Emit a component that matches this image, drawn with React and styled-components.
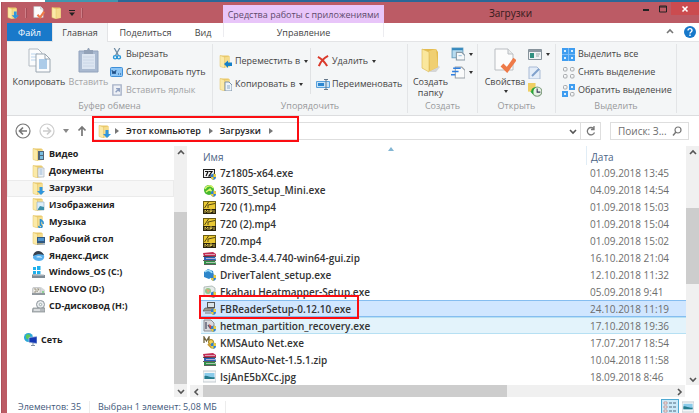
import React from 'react';
import styled, { createGlobalStyle, css } from 'styled-components';

const Global = createGlobalStyle`
  * { box-sizing: border-box; }
  body { margin: 0; background: #fff; font: 500 9px/12px "Open Sans", "Noto Sans", sans-serif; color: #444; overflow: hidden; }
  button, input { font: inherit; color: inherit; border: 0; background: none; padding: 0; margin: 0; }
  svg { display: block; flex: none; }
`;

/* ---------- layout ---------- */
const Desktop = styled.div`
  display: flex; flex-direction: column; height: 100vh; padding: 2px 0 0 1px;
  background: linear-gradient(90deg, #fff 0 45px, #4096b0 45px 118px, #2a6797 118px);
`;
const Frame = styled.div`
  flex: 1; min-height: 0; display: flex; flex-direction: column;
  background: #bc5b65; padding-left: 5px; border-left: 1px solid #a9505a;
`;
const TitleBar = styled.header`display: flex; height: 21px; flex: none;`;
const QuickAccess = styled.div`
  width: 216px; flex: none; display: flex; align-items: center; gap: 6px;
`;
const QuickButton = styled.button`display: flex;`;
const Tick = styled.span`width: 2px; height: 10px; background: #cf7f88; border-right: 1px solid #a34d57;`;
const ContextTitle = styled.div`
  width: 161px; flex: none; margin-top: 3px; background: #e8c5f9; color: #5d4a6b;
  text-align: center; line-height: 20px; white-space: nowrap; font-weight: 400;
`;
const Title = styled.h1`
  flex: 1; margin: 0; text-align: center; font-size: 10px; font-weight: 500; line-height: 22px; color: #33191c;
`;
const WindowControls = styled.div`display: flex; flex: none; height: 13px;`;
const WindowButton = styled.button`
  width: ${p => (p.$close ? 28 : 17)}px; display: flex; align-items: center; justify-content: center;
  background: ${p => (p.$close ? '#cb4b4f' : 'transparent')};
`;

const Tabs = styled.nav`display: flex; height: 19px; flex: none; background: #fff; border-bottom: 1px solid #e3e4e6;`;
const Tab = styled.button`
  width: ${p => p.$w}px; flex: none; text-align: center; line-height: 20px; height: 19px; color: #444;
  ${p => p.$file && css`background: #1979ca; color: #fff; height: 18px;`}
  ${p => p.$active && css`background: #f4f6f7; border: solid #e3e4e6; border-width: 0 1px;`}
  ${p => p.$context && css`border: solid #ececf0; border-width: 0 1px; height: 14px;`}
`;
const TabTools = styled.div`margin-left: auto; display: flex; align-items: center; gap: 10px; padding-right: 3px;`;

const Ribbon = styled.section`
  display: flex; height: 74px; flex: none; background: #f4f6f7; border-bottom: 1px solid #dcdddf; padding-bottom: 2px;
`;
const Group = styled.div`
  flex: 0 0 ${p => p.$w}px; display: flex; flex-direction: column; border-right: 1px solid #e3e5e7; margin-top: 2px;
`;
const GroupBody = styled.div`flex: 1; display: flex; padding-left: ${p => p.$pad || 0}px; gap: ${p => p.$gap || 0}px;`;
const GroupLabel = styled.div`text-align: center; color: #98999b; height: 13px; line-height: 12px;`;
const Stack = styled.div`
  display: flex; flex-direction: column; gap: ${p => p.$gap}px; padding-top: ${p => p.$top}px;
  ${p => p.$w && css`width: ${p.$w}px; flex: none;`}
  ${p => p.$ruled && css`border-right: 1px solid #e0e2e4; height: 46px; margin-top: 4px; padding-top: 6px;`}
`;
const Command = styled.button`
  display: flex; align-items: center; gap: 3px; height: 14px; line-height: 14px; white-space: nowrap; color: ${p => (p.disabled ? '#a3a4a6' : '#444')};
`;
const CommandIcon = styled.span`width: 13px; flex: none; display: flex; justify-content: center;`;
const BigCommand = styled.button`
  width: ${p => p.$w}px; flex: none; display: flex; flex-direction: column; align-items: center; padding-top: 4px; gap: 3px;
  line-height: 11px; white-space: nowrap; color: ${p => (p.disabled ? '#a3a4a6' : '#444')};
`;
const Caret = styled.i`
  display: inline-block; border: 2px solid transparent; border-top: 3px solid #333; border-bottom: 0; margin-left: 1px;
`;

const AddressRow = styled.div`
  position: relative; display: flex; align-items: center; height: 30px; flex: none; background: #fff; padding-right: 10px;
`;
const NavButtons = styled.div`width: 86px; flex: none; display: flex; align-items: center; gap: 8px; padding-left: 8px;`;
const PlainButton = styled.button`display: flex; align-items: center; justify-content: center;`;
const AddressBox = styled.div`
  flex: 1; display: flex; align-items: center; height: 18px; border: 1px solid #dedede; padding-left: 4px; color: #222; font-weight: 600;
`;
const Crumb = styled.a`padding: 0 8px 0 7px; white-space: nowrap; color: inherit; text-decoration: none;`;
const RootCrumb = styled.button`margin-left: 4px;`;
const AddressEnd = styled.div`
  margin-left: auto; display: flex; align-items: center; height: 16px;
`;
const EndButton = styled(PlainButton)`
  width: ${p => p.$w}px; height: 16px; border-left: ${p => (p.$line ? '1px solid #dedede' : '0')};
`;
const Search = styled.label`
  width: 79px; height: 18px; margin-left: 9px; border: 1px solid #dedede; display: flex; align-items: center; padding: 0 6px 0 7px; color: #6d6d6d;
  font-size: 10px;
  input { flex: 1; min-width: 0; outline: 0; }
  input::placeholder { color: #6d6d6d; opacity: 1; }
`;
const Mark = styled.span`
  position: absolute; z-index: 2; border: 2px solid #fb0d12; pointer-events: none;
  left: ${p => p.$left}px; width: ${p => p.$width}px; top: ${p => p.$top}px; bottom: ${p => p.$bottom}px;
`;

const Content = styled.main`flex: 1; min-height: 0; display: flex; background: #fff;`;
const NavPane = styled.aside`width: 180px; flex: none; display: flex;`;
const NavList = styled.ul`
  flex: 1; margin: 0; padding: 0 0 15px; list-style: none; display: grid; grid-template-rows: repeat(14, 1fr);
`;
const NavItem = styled.li`
  display: flex; align-items: center; padding-left: ${p => (p.$root ? 16 : 24)}px;
  border: 1px solid ${p => (p.$active ? '#ebebeb' : 'transparent')}; background: ${p => (p.$active ? '#f7f7f7' : 'transparent')};
`;
const NavLink = styled.a`
  display: flex; align-items: center; gap: 4px; color: #222; font-weight: 700; text-decoration: none; white-space: nowrap;
`;
const VScroll = styled.div`width: 13px; flex: none; display: flex; flex-direction: column; background: #f0f0f0;`;
const HScroll = styled.div`height: 12px; flex: none; display: flex; background: #f0f0f0; margin-right: 1px;`;
const ScrollArrow = styled(PlainButton)`width: 13px; height: 13px; flex: none;`;
const ScrollTrack = styled.div`flex: ${p => p.$n} 0 0; background: ${p => (p.$thumb ? '#cdcdcd' : 'transparent')};`;

const FilePane = styled.section`flex: 1; min-width: 0; display: flex; margin-left: 3px;`;
const FileMain = styled.div`flex: 1; min-width: 0; display: flex; flex-direction: column;`;
const FileArea = styled.div`flex: 1; min-height: 0; padding-left: 11px;`;
const ScrollColumn = styled.div`display: flex; padding-bottom: 12px;`;
const FileTable = styled.table`
  width: 100%; height: 100%; border-collapse: separate; border-spacing: 0; table-layout: fixed; font-size: 10px;
`;
const HeadCell = styled.th`
  height: 19px; padding: 2px 0 0 ${p => (p.$date ? 4 : 2)}px; width: ${p => (p.$date ? '100px' : 'auto')};
  text-align: left; font-weight: 500; color: #4d6485; position: relative;
  ${p => p.$date && css`border-left: 1px solid #e1edf6;`}
  svg { position: absolute; top: 1px; left: 187px; }
`;
const FileRow = styled.tr`
  --edge: ${p => (p.$state === 'selected' ? '#85bdf0' : p.$state === 'hover' ? '#b6e0f3' : 'transparent')};
  background: ${p => (p.$state === 'selected' ? '#d0e6ff' : p.$state === 'hover' ? '#e3f3fb' : 'transparent')};
`;
const Cell = styled.td`
  position: relative; padding: 0 0 0 ${p => (p.$date ? 4 : 2)}px; border: solid var(--edge); border-width: 1px 0;
  font-weight: ${p => (p.$date ? 500 : 600)}; color: ${p => (p.$date ? '#6d6d6d' : '#333')}; white-space: nowrap;
`;
const FileName = styled.span`display: flex; align-items: center; gap: 4px; height: 14px;`;

const Status = styled.footer`
  height: 16px; flex: none; display: flex; align-items: center; background: #fff; color: #42587a; padding: 3px 5px 0 11px;
`;
const StatusText = styled.span`padding-right: 8px; margin-right: 8px; border-right: 1px solid #ececec; line-height: 12px;`;
const Views = styled.div`margin-left: auto; display: flex; gap: 3px; align-items: center;`;
const ViewButton = styled(PlainButton)`
  width: ${p => (p.$on ? 18 : 12)}px; height: 16px;
  ${p => p.$on && css`background: #cbe9f8; border: 1px solid #4fa9d2;`}
`;

/* ---------- drawings ---------- */
const Svg = ({ w = 13, h = w, box = '0 0 13 13', children }) => (
  <svg width={w} height={h} viewBox={box} fill="none" aria-hidden="true">{children}</svg>
);
const FolderShape = () => (
  <>
    <path d="M1 .5h8.500l1 1V12H5z" fill="#e9c868" />
    <path d="M5 2.500l5.500-1V12L5 13z" fill="#f5dc8c" />
    <path d="M1 .5l4.500 1.500v11L1 11.500z" fill="#fbeaa8" stroke="#e2c163" strokeWidth=".5" />
  </>
);
const overlays = {
  none: null,
  down: <path d="M7.500 5h3v4h2.500l-4 4-4-4h2.500z" fill="#2f95dd" />,
  left: <path d="M5 9l4-3.500v2h4v3.500H9V13z" fill="#1680c8" />,
  page: <><path d="M6 4h4l3 3v6H6z" fill="#eef4fa" stroke="#7e95ab" /><path d="M8 8h3M8 10h3" stroke="#89a9c8" /></>,
  video: <><path d="M6 3h6v9H6z" fill="#526577" /><path d="M8 4h3v3H8zM8 8h3v3H8z" fill="#79bde0" /></>,
  doc: <><path d="M6 3h6v9H6z" fill="#eef2f6" stroke="#a7b1bb" strokeWidth=".7" /><path d="M7.500 5h3M7.500 7h3M7.500 9h3" stroke="#6f9bc4" strokeWidth=".7" /></>,
  image: <><path d="M5 4h7v8H5z" fill="#dceefa" stroke="#9eb4c4" strokeWidth=".7" /><path d="M6 11l2-3 4 1v3H6z" fill="#3a8fa8" /></>,
  music: <path d="M8.500 11V4c0 2 3.500 1.500 2.500 5M8 10a1.500 1.500 0 1 1-1 1" stroke="#2d8fd2" strokeWidth="1.600" />,
  desk: <><path d="M5 5h8v6H5z" fill="#31587f" /><path d="M6 6h6v3H6z" fill="#4d93cf" /><path d="M5 12h8" stroke="#5f7385" /></>,
};
const Folder = ({ o = 'none', s = 13 }) => <Svg w={s}><FolderShape />{overlays[o]}</Svg>;

const shield = <><path d="M8 7.500l2.500-1 2.500 1v2.500c0 1.500-1 2.500-2.500 3C9 12.500 8 11.500 8 10z" fill="#2f7fd0" /><path d="M10.500 6.500l2.500 1V10h-2.500zM8 10h2.500v3C9 12.500 8 11.500 8 10z" fill="#f0cf3a" /></>;
const icons = {
  yandex: <><path d="M1 9c0-4 2-6 5-6 4 0 7 2 6 6-1 4-9 4-11 0z" fill="#58b0ee" /><path d="M1 7c1-6 8-7 11-1-4-1-7-1-11 1z" fill="#39414d" /><path d="M4 8c2-2 6-1 6 1-3-1-4 0-6-1z" fill="#cfe9fb" /></>,
  win: <><path d="M1 1h3v3H1zM5 0h3.500v4H5zM1 5h3v3H1zM5 5h3.500v3.500H5z" fill="#1fb0ec" /><path d="M1 8l12 1v3H0V9z" fill="#7f8b95" /><path d="M1 9h11" stroke="#c4ccd2" /></>,
  drive: <><path d="M1 4h8l4 3v5H0V6z" fill="#d5d8da" /><path d="M0 10h13v2H0z" fill="#8f979d" /><path d="M1 5h7v5H1z" fill="#f4f4f0" stroke="#aaa" strokeWidth=".5" /><path d="M2 6h2v3H2M5 6h2L5 9" stroke="#8a8470" strokeWidth=".8" /><path d="M10 9h2" stroke="#48c94f" /></>,
  cd: <><circle cx="8.500" cy="4.500" r="4" fill="#e8ebee" stroke="#8d959b" /><circle cx="8.500" cy="4.500" r="1.200" fill="#fff" stroke="#9aa" /><path d="M1 8h12v4H0z" fill="#b5babe" stroke="#83898e" strokeWidth=".7" /><path d="M2 10h6" stroke="#fff" /></>,
  net: <><circle cx="4.500" cy="4.500" r="4.500" fill="#2ba8d8" /><path d="M2 2c3-2 5 0 4 2S3 7 2 5z" fill="#5cc95a" /><path d="M5 4.500l8-1v7l-8-1z" fill="#1337b4" stroke="#b9cbe0" strokeWidth=".7" /><path d="M9 10v2M7 12.500h4" stroke="#7e8fa3" /></>,
  seven: <><path d="M0 2h12v9H0z" fill="#222" /><path d="M1 3h10v7H1z" fill="#f4f4f4" /><path d="M2 4.500h3L3 9M6 4.500h3L6 9h3" stroke="#111" strokeWidth="1.200" />{shield}</>,
  green: <><circle cx="6" cy="6" r="5" fill="#46b82f" /><path d="M2 5c2-4 7-4 8-1M3 8l4-3 2 3" stroke="#d8f56d" strokeWidth="1.500" />{shield}</>,
  mp4: <><path d="M0 0h13v13H0z" fill="#6f5f12" /><path d="M1 1h11v7H1z" fill="#eac934" /><path d="M1.500 7l4-6M5 7V4l7-1.500" stroke="#463c10" strokeWidth=".9" /><path d="M0 8h13v5H0z" fill="#2a2410" /><path d="M2 12V9l1.500 1.500L5 9v3M7 12V9h2v1.500H7M11 9v3" stroke="#f5dc5a" strokeWidth=".8" /></>,
  rar: <><path d="M0 1l10-1 3 2v2l-12 1z" fill="#c22d55" /><path d="M1 5h11l1 3H1z" fill="#2b5fb8" /><path d="M1 9h11l1 3H1z" fill="#2f9148" /><path d="M0 4.500h13M0 8.500h13M1 12.500h12" stroke="#333" strokeWidth=".8" /><path d="M2 2.500h10M3 6.500h9M3 10.500h9" stroke="#e6d5dc" strokeWidth=".7" /></>,
  talent: <><path d="M1 4l4-3 5 2 1 5-5 3-5-2z" fill="#2d86ca" /><path d="M2 4c3-3 6-1 7 1" stroke="#9fdcf6" strokeWidth="1.600" />{shield}</>,
  ekahau: <><path d="M1 2l8-1 3 2v8l-3 1-8-1z" fill="#e7ecea" stroke="#98a7a2" strokeWidth=".7" /><circle cx="5" cy="6" r="3" fill="#8fc98a" /><path d="M3 4l4 1-2 3z" fill="#e9a07b" />{shield}</>,
  setup: <><path d="M4 0h8v6H4z" fill="#545454" /><path d="M5 1h6v4H5z" fill="#d9e3e8" /><path d="M2 6h9l-1 3H0z" fill="#9b9b92" stroke="#555" strokeWidth=".7" /><path d="M2 11h6" stroke="#777" />{shield}</>,
  hetman: <><path d="M1 1h7l3 3v8H1z" fill="#d8dade" stroke="#8b8d94" /><path d="M3 3v7M5 6l3 4" stroke="#5a5d70" strokeWidth="1.400" /><path d="M6 5l4 3-3 2z" fill="#d7493d" />{shield}</>,
  kms: <><path d="M1 7V1l2.500 4L6 1v6" stroke="#70643f" strokeWidth="1.300" /><circle cx="8" cy="6" r="2.500" fill="#f2cf55" stroke="#a08126" /><path d="M5 8l4 4" stroke="#c69a31" strokeWidth="2" />{shield}</>,
  jpg: <><path d="M0 1h13v11H0z" fill="#f4f6f7" stroke="#c3cbd0" /><path d="M1.500 3h10v6h-10z" fill="#8acbea" /><path d="M1.500 9V6c3-1 5 2 10 1v2z" fill="#247b8d" /></>,
};
const Pic = ({ n }) => <Svg>{icons[n]}</Svg>;

const CheckedPage = ({ w, h }) => (
  <Svg w={w} h={h} box="0 0 22 25">
    <path d="M1 1h13l5 5v16H1z" fill="#fcfcfc" stroke="#b9bdc1" /><path d="M14 1v5h5" stroke="#b9bdc1" fill="#e9ebec" />
    <path d="M8 17l5 5 8-11" stroke="#ee7a48" strokeWidth="4" />
  </Svg>
);
const Chevron = ({ d = 'down', c = '#555' }) => {
  const p = { down: 'M1 3l3 3 3-3', up: 'M1 5l3-3 3 3', left: 'M5 1L2 4l3 3', right: 'M3 1l3 3-3 3' }[d];
  return <Svg w={8} box="0 0 8 8"><path d={p} stroke={c} strokeWidth="1.600" /></Svg>;
};
const CrumbArrow = () => <Svg w={4} h={6} box="0 0 4 6"><path d="M0 0l4 3-4 3z" fill="#777" /></Svg>;
const CopyIcon = () => (
  <Svg w={23} h={25} box="0 0 23 25">
    <path d="M1 1h9l4 4v13H1z" fill="#fbfcfd" stroke="#b3bbc3" /><path d="M3 6h7M3 9h7M3 12h7" stroke="#b9d4ee" />
    <path d="M8 6h9l5 5v13H8z" fill="#fbfcfd" stroke="#99a5b0" /><path d="M17 6v5h5" stroke="#99a5b0" />
    <path d="M11 12h8M11 14h8M11 16h8M11 18h8M11 20h8" stroke="#5f9bd4" />
  </Svg>
);
const PasteIcon = () => (
  <Svg w={21} h={25} box="0 0 21 25">
    <path d="M1 3h19v21H1z" fill="#a9b9d0" stroke="#92a3bd" /><path d="M4 6h13v15H4z" fill="#dce5f1" />
    <path d="M6 2h3l1-2h1l1 2h3v4H6z" fill="#93a2b8" />
    <path d="M5 9h11M5 12h11M5 15h11M5 18h11" stroke="#cad6e6" />
  </Svg>
);
const CutIcon = () => (
  <Svg w={12}><path d="M3.500 0l4.500 8M9.500 0L5 8" stroke="#6d8ba3" strokeWidth="1.300" /><circle cx="4.500" cy="10" r="1.800" stroke="#2796d8" strokeWidth="1.500" /><circle cx="8.500" cy="10" r="1.800" stroke="#2796d8" strokeWidth="1.500" /></Svg>
);
const PathIcon = () => (
  <Svg w={13} h={10} box="0 0 13 10"><rect x=".5" y=".5" width="12" height="9" rx="1" fill="#8cc5f6" stroke="#3e8fd8" /><path d="M2 3l1 4 1-3 1 3 1-4M8 7h1M10 7h1" stroke="#1d4d85" /></Svg>
);
const LinkIcon = () => (
  <Svg w={12}><path d="M2 1h9v11H2z" fill="#eef1f6" stroke="#a7b2c8" strokeWidth="1.500" /><path d="M5 9l4-4M5.500 5H9v3.500" stroke="#8fa0c0" strokeWidth="1.500" /></Svg>
);
const DeleteIcon = () => <Svg w={12}><path d="M1 2c4 2 7 5 10 10M12 1C8 3 4 7 2 12" stroke="#da3a2b" strokeWidth="2.200" /></Svg>;
const RenameIcon = () => (
  <Svg w={14} h={11} box="0 0 14 11"><path d="M.5 2.500h13v6H.5z" fill="#c5e2f8" stroke="#5aa2dc" /><path d="M2 4h6v3H2z" fill="#2c86cf" /><path d="M8 .5h4M10 0v10M8 10.500h4" stroke="#66798a" /></Svg>
);
const BigFolder = () => (
  <Svg w={21} h={25} box="0 0 21 25">
    <path d="M15 15l5 4-4 5H9z" fill="#d5d6d7" /><path d="M2 1h14l2 3v15l-8 4-8-3z" fill="#e4bc50" /><path d="M9 3l7-2 2 18-8 4z" fill="#f0cf71" />
    <path d="M2 1l7 3v20l-7-4z" fill="#fae79d" stroke="#dfbf60" strokeWidth=".7" />
  </Svg>
);
const NewItem = () => (
  <Svg w={14}><path d="M1 1h10v9H1z" fill="#b8dcf0" stroke="#6fa5c4" /><path d="M1 2h10" stroke="#3589bd" strokeWidth="2" /><path d="M5 5h5l3 3v4H5z" fill="#f7f9fa" stroke="#899aa6" /><path d="M7 8h3" stroke="#9dc4de" /></Svg>
);
const EasyAccess = () => (
  <Svg w={14}><path d="M4 2h6l3 3v7H4z" fill="#fafbfb" stroke="#9aa2a9" /><path d="M2 3h7M1 6h6M0 9h4" stroke="#2f7fe0" strokeWidth="1.500" /></Svg>
);
const OpenIcon = () => (
  <Svg w={14} h={11} box="0 0 14 11"><path d="M.5.5h13v10H.5z" fill="#eef2f4" stroke="#87939b" /><path d="M1 2h12" stroke="#8d99a3" strokeWidth="2" /><path d="M2 4h4v5H2z" fill="#2f8f7f" /><path d="M8 5h4M8 7h3" stroke="#9aa" /></Svg>
);
const EditIcon = () => <Svg w={13}><path d="M1 1h8l3 3v9H1z" fill="#e4edf8" stroke="#a9bbd5" /><path d="M4 10l7-7" stroke="#7fa0cc" strokeWidth="2" /></Svg>;
const HistoryIcon = () => (
  <Svg w={14}><path d="M0 0h7v8H0z" fill="#efcf62" /><circle cx="8.500" cy="8" r="4.300" fill="#e7f3e4" stroke="#7d9b7c" /><path d="M8.500 5v3.500h3" stroke="#335" /><path d="M2 8l3 3V8c0-2 1-3 3-4-3 0-5 1-5 4z" fill="#26a537" /></Svg>
);
const SelectIcon = ({ on }) => (
  <Svg w={13}>
    {on === '1111' && <path d="M0 0h13v13H0z" fill="#7dbcf5" />}
    {[[0, 0], [7, 0], [0, 7], [7, 7]].map(([x, y], i) => {
      if (on[i] === '1') return <g key={i}><path d={`M${x} ${y}h6v6h-6z`} fill="#3f9df0" /><path d={`M${x + 2} ${y + 2}h2v2h-2z`} fill="#d9eeff" /></g>;
      return <rect key={i} x={x + 1.5} y={y + 1.5} width="3.500" height="3.500" rx="1" stroke="#a6a9ac" />;
    })}
  </Svg>
);
const Round = ({ dir, c }) => (
  <Svg w={16} box="0 0 16 16"><circle cx="8" cy="8" r="7" stroke={c} strokeWidth="1.200" /><path d={dir === 'l' ? 'M12 8H4.500M8 4.500L4.500 8 8 11.500' : 'M4 8h7.500M8 4.500L11.500 8 8 11.500'} stroke={c} strokeWidth="1.700" /></Svg>
);

/* ---------- data ---------- */
const places = [
  ['Видео', <Folder o="video" />], ['Документы', <Folder o="doc" />], ['Загрузки', <Folder o="down" />],
  ['Изображения', <Folder o="image" />], ['Музыка', <Folder o="music" />], ['Рабочий стол', <Folder o="desk" />],
  ['Яндекс.Диск', <Pic n="yandex" />], ['Windows_OS (C:)', <Pic n="win" />], ['LENOVO (D:)', <Pic n="drive" />],
  ['CD-дисковод (H:)', <Pic n="cd" />],
];
const files = [
  ['7z1805-x64.exe', '01.09.2018 13:45', 'seven'], ['360TS_Setup_Mini.exe', '04.09.2018 14:54', 'green'],
  ['720 (1).mp4', '01.09.2018 15:03', 'mp4'], ['720 (2).mp4', '01.09.2018 15:04', 'mp4'], ['720.mp4', '01.09.2018 15:02', 'mp4'],
  ['dmde-3.4.4.740-win64-gui.zip', '16.10.2018 21:04', 'rar'], ['DriverTalent_setup.exe', '12.10.2018 11:32', 'talent'],
  ['Ekahau Heatmapper-Setup.exe', '05.09.2018 9:41', 'ekahau'], ['FBReaderSetup-0.12.10.exe', '24.10.2018 11:19', 'setup', 'selected'],
  ['hetman_partition_recovery.exe', '17.10.2018 19:36', 'hetman', 'hover'], ['KMSAuto Net.exe', '17.07.2017 18:54', 'kms'],
  ['KMSAuto-Net-1.5.1.zip', '10.04.2018 11:58', 'rar'], ['IsjAnE5bXCc.jpg', '18.09.2018 8:46', 'jpg'],
];

export default function App() {
  return (
    <Desktop>
      <Global />
      <Frame>
        <TitleBar>
          <QuickAccess>
            <QuickButton aria-label="Загрузки"><Folder o="down" s={12} /></QuickButton>
            <Tick />
            <QuickButton aria-label="Свойства"><CheckedPage w={12} h={13} /></QuickButton>
            <QuickButton aria-label="Новая папка"><Folder s={12} /></QuickButton>
            <QuickButton aria-label="Настройка панели">
              <Svg w={6} h={6} box="0 0 6 6"><path d="M0 .5h6" stroke="#222" /><path d="M0 2.500h6L3 6z" fill="#222" /></Svg>
            </QuickButton>
            <Tick />
          </QuickAccess>
          <ContextTitle>Средства работы с приложениями</ContextTitle>
          <Title>Загрузки</Title>
          <WindowControls>
            <WindowButton aria-label="Свернуть"><Svg w={8} box="0 0 8 8"><path d="M1 5h6" stroke="#222" strokeWidth="2" /></Svg></WindowButton>
            <WindowButton aria-label="Развернуть"><Svg w={8} box="0 0 8 8"><path d="M.5 1h7v6h-7zM0 2h8" stroke="#222" /></Svg></WindowButton>
            <WindowButton $close aria-label="Закрыть"><Svg w={8} box="0 0 8 8"><path d="M1.500 1.500l5 5M6.500 1.500l-5 5" stroke="#fff" strokeWidth="1.600" /></Svg></WindowButton>
          </WindowControls>
        </TitleBar>
        <Tabs>
          <Tab $file $w={45}>Файл</Tab>
          <Tab $active $w={56}>Главная</Tab>
          <Tab $w={75}>Поделиться</Tab>
          <Tab $w={40}>Вид</Tab>
          <Tab $context $w={161}>Управление</Tab>
          <TabTools>
            <PlainButton aria-label="Свернуть ленту"><Chevron d="up" c="#777" /></PlainButton>
            <PlainButton aria-label="Справка">
              <Svg w={12} box="0 0 12 12"><circle cx="6" cy="6" r="6" fill="#1678ca" /><path d="M4 4.500c0-2.500 4-2.500 4 0C8 6 6 6 6 7.500M6 8.500V10" stroke="#fff" strokeWidth="1.400" /></Svg>
            </PlainButton>
          </TabTools>
        </Tabs>
        <Ribbon>
          <Group $w={206}>
            <GroupBody $pad={4}>
              <BigCommand $w={56}><CopyIcon />Копировать</BigCommand>
              <BigCommand $w={43} disabled><PasteIcon />Вставить</BigCommand>
              <Stack $gap={4} $top={3}>
                <Command><CommandIcon><CutIcon /></CommandIcon>Вырезать</Command>
                <Command><CommandIcon><PathIcon /></CommandIcon>Скопировать путь</Command>
                <Command disabled><CommandIcon><LinkIcon /></CommandIcon>Вставить ярлык</Command>
              </Stack>
            </GroupBody>
            <GroupLabel>Буфер обмена</GroupLabel>
          </Group>
          <Group $w={195}>
            <GroupBody $pad={6} $gap={5}>
              <Stack $gap={9} $w={92} $ruled>
                <Command><Folder o="left" />Переместить в <Caret /></Command>
                <Command><Folder o="page" />Копировать в <Caret /></Command>
              </Stack>
              <Stack $gap={9} $top={10}>
                <Command><CommandIcon><DeleteIcon /></CommandIcon>Удалить <Caret /></Command>
                <Command><CommandIcon><RenameIcon /></CommandIcon>Переименовать</Command>
              </Stack>
            </GroupBody>
            <GroupLabel>Упорядочить</GroupLabel>
          </Group>
          <Group $w={70}>
            <GroupBody $pad={2}>
              <BigCommand $w={41}><BigFolder /><span>Создать<br />папку</span></BigCommand>
              <Stack $gap={4} $top={3}>
                <Command aria-label="Создать элемент"><NewItem /><Caret /></Command>
                <Command aria-label="Простой доступ"><EasyAccess /><Caret /></Command>
              </Stack>
            </GroupBody>
            <GroupLabel>Создать</GroupLabel>
          </Group>
          <Group $w={78}>
            <GroupBody $pad={4}>
              <BigCommand $w={46}><CheckedPage w={22} h={25} />Свойства<Caret /></BigCommand>
              <Stack $gap={4} $top={3}>
                <Command aria-label="Открыть"><OpenIcon /><Caret /></Command>
                <Command aria-label="Изменить"><EditIcon /></Command>
                <Command aria-label="Журнал"><HistoryIcon /></Command>
              </Stack>
            </GroupBody>
            <GroupLabel>Открыть</GroupLabel>
          </Group>
          <Group $w={121}>
            <GroupBody $pad={6}>
              <Stack $gap={4} $top={3}>
                <Command><SelectIcon on="1111" />Выделить все</Command>
                <Command><SelectIcon on="0000" />Снять выделение</Command>
                <Command><SelectIcon on="0110" />Обратить выделение</Command>
              </Stack>
            </GroupBody>
            <GroupLabel>Выделить</GroupLabel>
          </Group>
        </Ribbon>
        <AddressRow>
          <NavButtons>
            <PlainButton aria-label="Назад"><Round dir="l" c="#777" /></PlainButton>
            <PlainButton aria-label="Вперёд"><Round dir="r" c="#ccc" /></PlainButton>
            <PlainButton aria-label="История"><Svg w={6} h={4} box="0 0 6 4"><path d="M0 0h6L3 4z" fill="#888" /></Svg></PlainButton>
            <PlainButton aria-label="Вверх"><Svg w={10} h={12} box="0 0 10 12"><path d="M5 11V2M1.500 5.500L5 2l3.500 3.500" stroke="#777" strokeWidth="1.700" /></Svg></PlainButton>
          </NavButtons>
          <AddressBox>
            <Folder o="down" /><RootCrumb aria-label="Корень"><CrumbArrow /></RootCrumb>
            <Crumb href="#">Этот компьютер</Crumb><CrumbArrow />
            <Crumb href="#">Загрузки</Crumb><CrumbArrow />
            <AddressEnd>
              <EndButton $w={15} aria-label="Список"><Chevron /></EndButton>
              <EndButton $w={20} $line aria-label="Обновить">
                <Svg w={10} box="0 0 10 10"><path d="M8 3A3.700 3.700 0 1 0 8.500 6.500M8 0v3.500H5" stroke="#777" strokeWidth="1.300" /></Svg>
              </EndButton>
            </AddressEnd>
          </AddressBox>
          <Search>
            <input aria-label="Поиск" placeholder="Поиск: З..." />
            <Svg w={10} box="0 0 10 10"><circle cx="6" cy="4" r="3" stroke="#777" strokeWidth="1.200" /><path d="M4 6L1 9.500" stroke="#777" strokeWidth="1.500" /></Svg>
          </Search>
          <Mark $left={85} $width={207} $top={0} $bottom={4} />
        </AddressRow>
        <Content>
          <NavPane>
            <NavList>
              {places.map(([name, icon], i) => (
                <NavItem key={name} $active={i === 2}><NavLink href="#">{icon}{name}</NavLink></NavItem>
              ))}
              <li aria-hidden="true" />
              <NavItem $root><NavLink href="#"><Pic n="net" />Сеть</NavLink></NavItem>
            </NavList>
            <VScroll>
              <ScrollArrow aria-label="Вверх"><Chevron d="up" /></ScrollArrow>
              <ScrollTrack $n={53} /><ScrollTrack $thumb $n={172} />
              <ScrollArrow aria-label="Вниз"><Chevron /></ScrollArrow>
            </VScroll>
          </NavPane>
          <FilePane>
            <FileMain>
              <FileArea>
                <FileTable>
                  <thead>
                    <tr>
                      <HeadCell>Имя<Svg w={6} h={4} box="0 0 6 4"><path d="M0 4h6L3 0z" fill="#83b6d3" /></Svg></HeadCell>
                      <HeadCell $date>Дата</HeadCell>
                    </tr>
                  </thead>
                  <tbody>
                    {files.map(([name, date, icon, state]) => (
                      <FileRow key={name} $state={state}>
                        <Cell><FileName><Pic n={icon} />{name}</FileName>{state === 'selected' && <Mark $left={-2} $width={160} $top={-6} $bottom={-3} />}</Cell>
                        <Cell $date>{date}</Cell>
                      </FileRow>
                    ))}
                  </tbody>
                </FileTable>
              </FileArea>
              <HScroll>
                <ScrollArrow aria-label="Влево"><Chevron d="left" /></ScrollArrow>
                <ScrollTrack $thumb $n={304} /><ScrollTrack $n={165} />
                <ScrollArrow aria-label="Вправо"><Chevron d="right" /></ScrollArrow>
              </HScroll>
            </FileMain>
            <ScrollColumn>
              <VScroll>
                <ScrollArrow aria-label="Вверх"><Chevron d="up" /></ScrollArrow>
                <ScrollTrack $n={49} /><ScrollTrack $thumb $n={76} /><ScrollTrack $n={88} />
                <ScrollArrow aria-label="Вниз"><Chevron /></ScrollArrow>
              </VScroll>
            </ScrollColumn>
          </FilePane>
        </Content>
        <Status>
          <StatusText>Элементов: 35</StatusText>
          <StatusText>Выбран 1 элемент: 5,08 МБ</StatusText>
          <Views>
            <ViewButton $on aria-label="Таблица">
              <Svg w={14} h={12} box="0 0 14 12"><path d="M1 1h3v2H1zM1 5h3v2H1zM1 9h3v2H1z" fill="#fff" stroke="#b78787" strokeWidth=".8" /><path d="M6 2h3M10 2h3M6 6h3M10 6h3M6 10h3M10 10h3" stroke="#4f6b80" /></Svg>
            </ViewButton>
            <ViewButton aria-label="Эскизы"><Svg w={12}>{icons.jpg}</Svg></ViewButton>
          </Views>
        </Status>
      </Frame>
    </Desktop>
  );
}
